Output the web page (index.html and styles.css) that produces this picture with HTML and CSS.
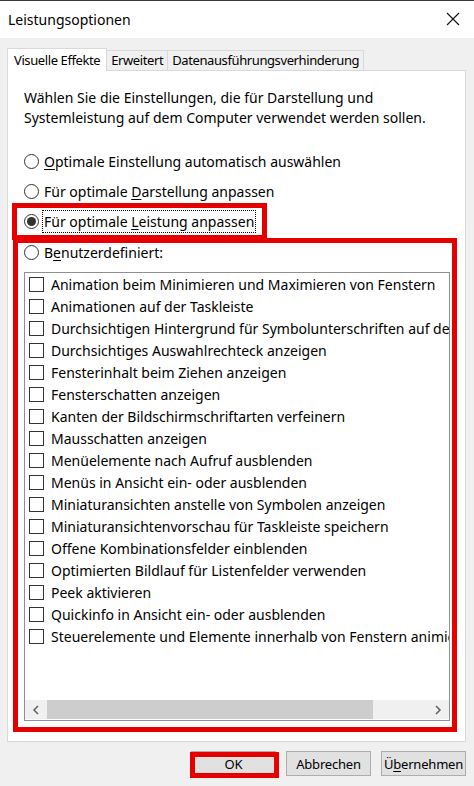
FILE: index.html
```html
<!DOCTYPE html>
<html lang="de">
<head>
    <meta charset="UTF-8">
    <meta name="viewport" content="width=device-width, initial-scale=1.0">
    <title>Leistungsoptionen</title>
    <link rel="stylesheet" href="styles.css">
</head>
<body>
    <div class="titlebar">
        <span class="title">Leistungsoptionen</span>
        <svg class="close" width="14" height="14" viewBox="0 0 14 14"><path d="M1 1 L13 13 M13 1 L1 13" stroke="#111" stroke-width="1.1" fill="none"/></svg>
    </div>
    <div class="dialog">
        <div class="tabs">
            <div class="tab active">Visuelle Effekte</div>
            <div class="tab">Erweitert</div>
            <div class="tab">Datenausführungsverhinderung</div>
        </div>
        <div class="panel">
            <p class="intro">Wählen Sie die Einstellungen, die für Darstellung und<br>Systemleistung auf dem Computer verwendet werden sollen.</p>
            <div class="radios">
                <div class="radio-row"><span class="radio"></span><span><u>O</u>ptimale Einstellung automatisch auswählen</span></div>
                <div class="radio-row"><span class="radio"></span><span>Für optimale <u>D</u>arstellung anpassen</span></div>
                <div class="radio-row"><span class="radio checked"></span><span class="focus">Für optimale <u>L</u>eistung anpassen</span></div>
                <div class="radio-row"><span class="radio"></span><span>B<u>e</u>nutzerdefiniert:</span></div>
            </div>
            <div class="listbox">
                <div class="items">
                    <div class="item"><span class="check"></span>Animation beim Minimieren und Maximieren von Fenstern</div>
                    <div class="item"><span class="check"></span>Animationen auf der Taskleiste</div>
                    <div class="item"><span class="check"></span>Durchsichtigen Hintergrund für Symbolunterschriften auf dem Desktop</div>
                    <div class="item"><span class="check"></span>Durchsichtiges Auswahlrechteck anzeigen</div>
                    <div class="item"><span class="check"></span>Fensterinhalt beim Ziehen anzeigen</div>
                    <div class="item"><span class="check"></span>Fensterschatten anzeigen</div>
                    <div class="item"><span class="check"></span>Kanten der Bildschirmschriftarten verfeinern</div>
                    <div class="item"><span class="check"></span>Mausschatten anzeigen</div>
                    <div class="item"><span class="check"></span>Menüelemente nach Aufruf ausblenden</div>
                    <div class="item"><span class="check"></span>Menüs in Ansicht ein- oder ausblenden</div>
                    <div class="item"><span class="check"></span>Miniaturansichten anstelle von Symbolen anzeigen</div>
                    <div class="item"><span class="check"></span>Miniaturansichtenvorschau für Taskleiste speichern</div>
                    <div class="item"><span class="check"></span>Offene Kombinationsfelder einblenden</div>
                    <div class="item"><span class="check"></span>Optimierten Bildlauf für Listenfelder verwenden</div>
                    <div class="item"><span class="check"></span>Peek aktivieren</div>
                    <div class="item"><span class="check"></span>Quickinfo in Ansicht ein- oder ausblenden</div>
                    <div class="item"><span class="check"></span>Steuerelemente und Elemente innerhalb von Fenstern animieren</div>
                </div>
                <div class="hscroll">
                    <div class="arrow"><svg width="8" height="10" viewBox="0 0 8 10"><path d="M6 1 L2 5 L6 9" stroke="#606060" stroke-width="1.5" fill="none"/></svg></div>
                    <div class="thumb"></div>
                    <div class="track"></div>
                    <div class="arrow"><svg width="8" height="10" viewBox="0 0 8 10"><path d="M2 1 L6 5 L2 9" stroke="#606060" stroke-width="1.5" fill="none"/></svg></div>
                </div>
            </div>
        </div>
        <div class="buttons">
            <button class="btn">OK</button>
            <button class="btn">Abbrechen</button>
            <button class="btn">Ü<u>b</u>ernehmen</button>
        </div>
    </div>

    <div class="mark mark-radio"></div>
    <div class="mark mark-list"></div>
    <div class="mark mark-ok"></div>
</body>
</html>
```

FILE: styles.css
```css
body { margin: 0; background: #f0f0f0; font-family: "Noto Sans", "Open Sans", sans-serif; font-size: 14px; color: #000; position: relative; height: 786px; overflow: hidden; }
u { text-decoration: underline; text-underline-offset: 2px; }

.titlebar { height: 37px; background: #fff; border-top: 1px solid #3a3a3a; display: flex; align-items: center; justify-content: space-between; padding: 0 14px 0 8px; }
.title { font-size: 14px; }
.close { display: block; margin-top: -1px; }

.dialog { padding: 9px 8px 0 7px; }
.tabs { display: flex; align-items: flex-end; height: 23px; position: relative; z-index: 1; font-size: 13px; letter-spacing: -0.4px; }
.tab { height: 20px; line-height: 19px; box-sizing: border-box; border: 1px solid #d9d9d9; border-bottom: none; padding: 0 4px; background: #f0f0f0; margin-left: -1px; }
.tab.active { height: 23px; line-height: 22px; background: #fff; margin-left: 0; padding: 0 6px 0 6px; margin-bottom: -1px; }

.panel { background: #fff; border: 1px solid #d9d9d9; height: 672px; box-sizing: border-box; padding: 17px 15px 0 16px; }
.intro { margin: 0; line-height: 20px; white-space: nowrap; }
.radios { margin-top: 18px; }
.radio-row { height: 30px; display: flex; align-items: center; gap: 5px; }
.radio-row:nth-child(n+3) { height: 31px; }
.radio { width: 15px; height: 15px; box-sizing: border-box; border: 1px solid #333; border-radius: 50%; display: flex; align-items: center; justify-content: center; }
.radio.checked::after { content: ""; width: 9px; height: 9px; border-radius: 50%; background: #333; }
.focus { outline: 1px dotted #000; outline-offset: 1px; }

.listbox { margin-top: 4px; width: 426px; height: 449px; box-sizing: border-box; border: 1px solid #8f8f8f; display: flex; flex-direction: column; }
.items { flex: 1; overflow: hidden; }
.item { height: 22px; display: flex; align-items: center; white-space: nowrap; padding-left: 4px; }
.check { flex: none; width: 15px; height: 15px; box-sizing: border-box; border: 1px solid #333; margin-right: 7px; }

.hscroll { height: 19px; display: flex; background: #f0f0f0; margin-bottom: 1px; }
.arrow { width: 22px; display: flex; align-items: center; justify-content: center; }
.thumb { width: 326px; background: #cdcdcd; }
.track { flex: 1; }

.buttons { display: flex; justify-content: flex-end; gap: 10px; margin-top: 9px; }
.btn { width: 85px; height: 25px; background: #e1e1e1; border: 1px solid #adadad; font-family: inherit; font-size: 13px; letter-spacing: -0.2px; color: #000; padding: 0; }

.mark { position: absolute; border: 5px solid #e60000; box-sizing: border-box; }
.mark-radio { left: 12px; top: 203px; width: 255px; height: 37px; }
.mark-list { left: 13px; top: 238px; width: 444px; height: 494px; }
.mark-ok { left: 190px; top: 752px; width: 89px; height: 26px; }
```
